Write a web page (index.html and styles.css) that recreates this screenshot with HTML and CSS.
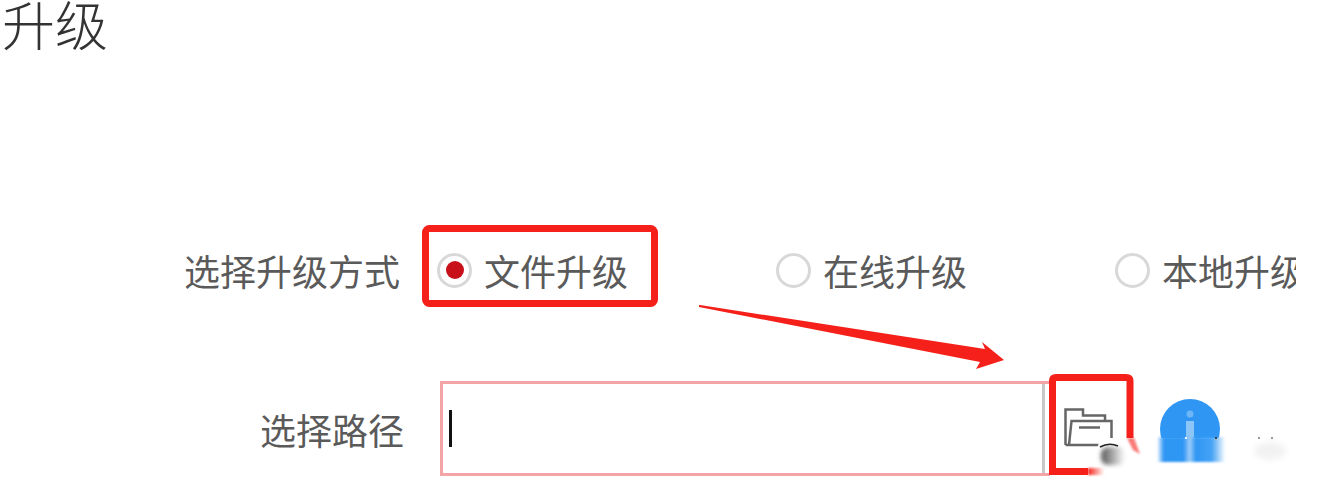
FILE: index.html
```html
<!DOCTYPE html>
<html lang="zh-CN">
<head>
<meta charset="utf-8">
<title>升级</title>
<link rel="stylesheet" href="styles.css">
</head>
<body>
<main class="page">
  <h1 class="title">升级</h1>
  <form class="form">
    <div class="row row-mode">
      <span class="label label-mode">选择升级方式</span>
      <div class="options">
        <span class="option"><span class="radio radio-on"><span class="dot"></span></span><span class="option-text">文件升级</span></span>
        <span class="option"><span class="radio"></span><span class="option-text">在线升级</span></span>
        <span class="option"><span class="radio"></span><span class="option-text">本地升级</span></span>
      </div>
    </div>
    <div class="row row-path">
      <span class="label label-path">选择路径</span>
      <div class="path-box">
        <span class="path-input"><span class="caret"></span></span>
        <span class="path-button">
          <svg class="folder" viewBox="0 0 50 40" width="50" height="40" aria-hidden="true">
            <path d="M1.500 37V1.500H19V7.500H41V12" fill="none" stroke="#666" stroke-width="2.500"/>
            <path d="M47.500 32V13H7.500L5 37H1.500M5 37H40" fill="none" stroke="#666" stroke-width="2.500"/>
            <path d="M15 19.500H36" stroke="#666" stroke-width="2.500"/>
          </svg>
        </span>
      </div>
      <svg class="info" viewBox="0 0 60 60" width="60" height="60" aria-hidden="true">
        <circle cx="30" cy="30" r="30" fill="#2f96f3"/>
        <circle cx="30" cy="15" r="3.500" fill="#6fb6f6"/>
        <rect x="26" y="22" width="8" height="38" fill="#8cc6f8"/>
      </svg>
    </div>
  </form>

  <svg class="marks" viewBox="0 0 1342 489" width="1342" height="489" aria-hidden="true">
    <defs>
      <filter id="soft" x="-40%" y="-60%" width="180%" height="220%"><feGaussianBlur stdDeviation="3"/></filter>
      <filter id="tight" x="-20%" y="-20%" width="140%" height="140%"><feGaussianBlur stdDeviation="1"/></filter>
      <filter id="mid" x="-30%" y="-30%" width="160%" height="160%"><feGaussianBlur stdDeviation="2"/></filter>
      <linearGradient id="smearBlue" x1="0" y1="0" x2="1" y2="0">
        <stop offset="0" stop-color="#2f96f3" stop-opacity="0"/>
        <stop offset=".1" stop-color="#2f96f3"/>
        <stop offset=".39" stop-color="#2f96f3"/>
        <stop offset=".48" stop-color="#9ccdf9"/>
        <stop offset=".57" stop-color="#2f96f3"/>
        <stop offset=".8" stop-color="#45a2f5"/>
        <stop offset="1" stop-color="#2f96f3" stop-opacity="0"/>
      </linearGradient>
      <linearGradient id="smearDark" x1="0" y1="0" x2="1" y2="0">
        <stop offset="0" stop-color="#555"/>
        <stop offset=".4" stop-color="#999"/>
        <stop offset="1" stop-color="#fff"/>
      </linearGradient>
      <linearGradient id="smearRed" x1="0" y1="0" x2="1" y2="0">
        <stop offset="0" stop-color="#f5201a"/>
        <stop offset="1" stop-color="#f5201a" stop-opacity="0"/>
      </linearGradient>
    </defs>
    <rect x="425.500" y="228.500" width="229" height="75" rx="4" fill="none" stroke="#f5201a" stroke-width="7"/>
    <path d="M1052.500 468V381Q1052.500 377.500 1056 377.500H1126Q1130 377.500 1130 381V440" fill="none" stroke="#f5201a" stroke-width="7"/>
    <path d="M1049 471.500H1088" fill="none" stroke="#f5201a" stroke-width="7"/>
    <polygon points="699,305 700,305 985,349 982,342 1004,360 976,369 980,362 699,307" fill="#f5201a"/>
    <polygon points="1100,438 1342,438 1342,489 1090,489 1090,476" fill="#fff"/>
    <rect x="1088" y="468" width="16" height="7" fill="url(#smearRed)" filter="url(#tight)"/>
    <rect x="1157" y="437" width="68" height="25" fill="url(#smearBlue)" filter="url(#tight)"/>
    <polygon points="1127,438 1134,438 1140,454 1133,450" fill="#f5201a" opacity=".6" filter="url(#tight)"/>
    <rect x="1101" y="447" width="24" height="18" rx="7" fill="url(#smearDark)" filter="url(#mid)"/>
    <path d="M1100 447Q1109 442 1118 446" fill="none" stroke="#222" stroke-width="1.500"/>
    <ellipse cx="1270" cy="451" rx="16" ry="9" fill="#f2f2f2" filter="url(#soft)"/>
    <g fill="#999"><rect x="1258" y="437" width="2" height="2"/><rect x="1271" y="437" width="2" height="2"/></g>
    <rect x="1185" y="437" width="2" height="2" fill="#e8f3fd"/>
    <rect x="1215" y="437" width="2" height="2" fill="#444"/>
  </svg>
</main>
</body>
</html>
```

FILE: styles.css
```css
* { box-sizing: border-box; }

html, body {
  margin: 0;
  background: #fff;
}

.page {
  position: relative;
  width: 1342px;
  height: 489px;
  overflow: hidden;
  font-family: "Noto Sans CJK SC", "Liberation Sans", sans-serif;
  color: #5a5a5a;
}

.title {
  margin: 0;
  padding-left: 2px;
  font-size: 53px;
  font-weight: 300;
  line-height: 46px;
  color: #333;
}

.form {
  display: flex;
  flex-direction: column;
  margin-top: 199px;
  gap: 86px;
}

.row {
  display: flex;
  align-items: center;
  font-size: 36px;
  line-height: 50px;
}

.label {
  flex: none;
  text-align: right;
  white-space: nowrap;
}

.label-mode {
  width: 400px;
}

.label-path {
  width: 404px;
}

.options {
  display: flex;
  width: 859px;
  margin-left: 37px;
  overflow: hidden;
}

.option {
  flex: none;
  display: flex;
  align-items: center;
  width: 339px;
  gap: 12px;
  white-space: nowrap;
}

.radio {
  flex: none;
  display: flex;
  align-items: center;
  justify-content: center;
  width: 35px;
  height: 35px;
  border: 3px solid #d8d8d8;
  border-radius: 50%;
}

.dot {
  width: 18px;
  height: 18px;
  border-radius: 50%;
  background: #c8101a;
}

.path-box {
  flex: none;
  display: flex;
  width: 610px;
  height: 95px;
  margin-left: 36px;
  border: 3px solid #f4a3a6;
  border-right: 0;
}

.path-input {
  flex: none;
  width: 602px;
  display: flex;
  align-items: center;
  padding-left: 6px;
  border-right: 3px solid #c9c9c9;
}

.caret {
  display: block;
  width: 3px;
  height: 37px;
  background: #111;
}

.path-button {
  flex: none;
  width: 0;
  display: block;
}

.folder {
  display: block;
  margin: 24px 0 0 19px;
}

.info {
  flex: none;
  margin-left: 110px;
}

.marks {
  position: absolute;
  left: 0;
  top: 0;
  pointer-events: none;
}
```
